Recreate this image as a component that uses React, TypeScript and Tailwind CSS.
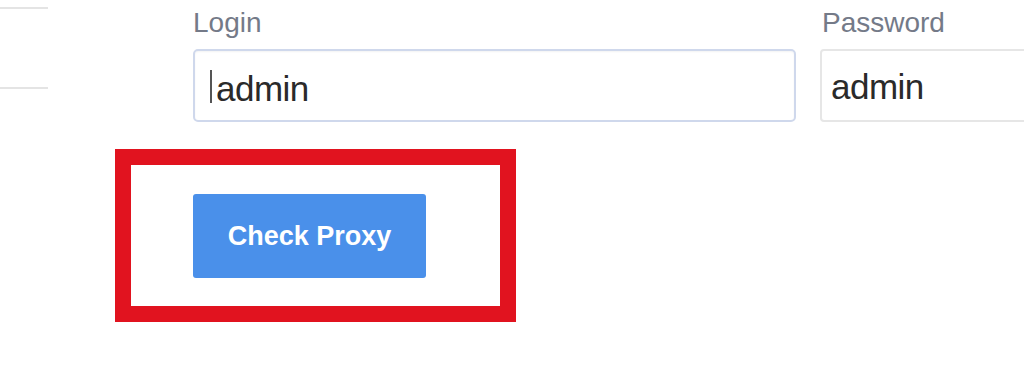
import React from "react";

export default function App() {
  return (
    <div className="relative w-[1024px] h-[374px] overflow-hidden bg-white font-['Liberation_Sans',Arial,sans-serif]">
      <div className="flex">
        <div className="w-[48px] shrink-0 pt-[7px]">
          <div className="h-[82px] border-y-2 border-[#e4e4e4]" />
        </div>
        <div className="ml-[145px] flex-1 pt-[5px]">
          <div className="flex gap-[24px]">
            <div className="w-[603px] shrink-0">
              <div className="text-[28px] leading-[36px] text-[#747a88] mb-[8px]">Login</div>
              <div className="h-[73px] rounded-[5px] border-2 border-[#cfd8ec] bg-white flex items-center pl-[15px] pt-[6px] shadow-[inset_0_1px_2px_rgba(0,0,0,0.05)]">
                <span className="w-[2px] h-[33px] bg-[#555] mr-[4px] -mt-[5px]" />
                <span className="text-[35px] leading-[40px] tracking-[-0.5px] text-[#2a2a2a]">admin</span>
              </div>
            </div>
            <div className="w-[300px] shrink-0">
              <div className="text-[28px] leading-[36px] text-[#747a88] mb-[8px] ml-[2px]">Password</div>
              <div className="h-[73px] rounded-[4px] border-2 border-[#e6e6e6] bg-white flex items-center pl-[9px] pt-[3px]">
                <span className="text-[35px] leading-[40px] tracking-[-0.5px] text-[#2a2a2a]">admin</span>
              </div>
            </div>
          </div>
          <div className="mt-[72px]">
            <button className="w-[233px] h-[84px] rounded-[3px] bg-[#4a90ea] text-white text-[27px] font-bold flex items-center justify-center">
              Check Proxy
            </button>
          </div>
        </div>
      </div>
      <div className="absolute left-[115px] top-[149px] w-[401px] h-[173px] border-[16px] border-[#e1131f] pointer-events-none" />
    </div>
  );
}
